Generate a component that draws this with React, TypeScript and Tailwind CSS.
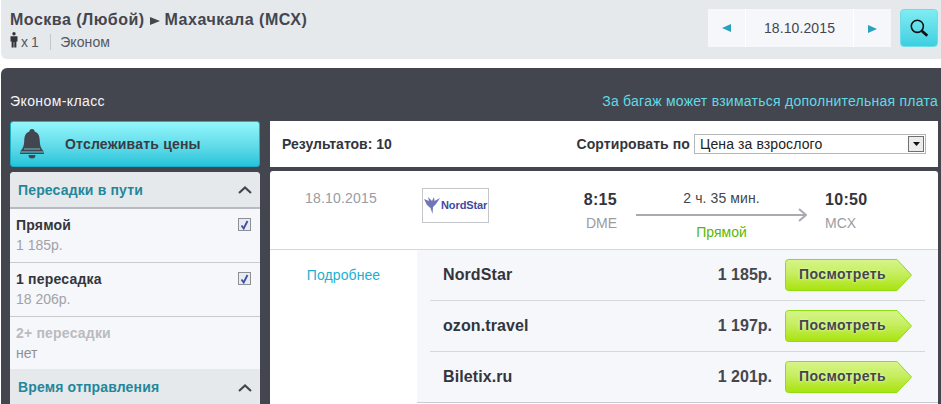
import { ReactNode } from 'react'

const offers = [
  { name: 'NordStar', price: '1 185р.' },
  { name: 'ozon.travel', price: '1 197р.' },
  { name: 'Biletix.ru', price: '1 201р.' },
]

function Chevron() {
  return (
    <svg width="14" height="9" viewBox="0 0 14 9" className="text-[#44464f]">
      <path d="M1 8 L7 2.5 L13 8" fill="none" stroke="currentColor" strokeWidth="2.2" />
    </svg>
  )
}

function Check() {
  return (
    <span className="w-[13px] h-[13px] border border-[#8c8f96] bg-[#e9ebf2] flex items-center justify-center">
      <svg width="9" height="10" viewBox="0 0 9 10">
        <path d="M1.5 5.5 L3.7 8.5 L7.5 1" fill="none" stroke="#3a4fa8" strokeWidth="1.8" />
      </svg>
    </span>
  )
}

function FilterHeader({ children, className }: { children: ReactNode; className?: string }) {
  return (
    <div className={`flex items-center justify-between px-[8px] bg-[#e6e9ec] ${className ?? ''}`}>
      <span className="pt-[1px] text-[14px] font-bold text-[#22879b] tracking-[0.15px]">{children}</span>
      <Chevron />
    </div>
  )
}

function StopRow({ label, price, enabled = true }: { label: string; price: string; enabled?: boolean }) {
  return (
    <div className={`pl-[6px] pr-[9px] pt-[6px] flex justify-between ${enabled ? 'h-[54px] border-b border-[#c9cbcf]' : 'h-[52px]'}`}>
      <div className="flex flex-col">
        <span className={`text-[14px] leading-[20px] font-bold tracking-[0.2px] ${enabled ? 'text-[#33353d]' : 'text-[#b9bbc0]'}`}>{label}</span>
        <span className={`text-[14px] leading-[20px] ${enabled ? 'text-[#a0a2a8]' : 'text-[#8e9096]'}`}>{price}</span>
      </div>
      {enabled && <div className="pt-[3px]"><Check /></div>}
    </div>
  )
}

function ViewButton() {
  return (
    <div className="relative w-[127px] h-[32px]">
      <svg width="127" height="32" viewBox="0 0 127 32" className="block">
        <defs>
          <linearGradient id="green" x1="0" y1="0" x2="0" y2="1">
            <stop offset="0" stopColor="#d6f58a" />
            <stop offset="0.45" stopColor="#c6ee60" />
            <stop offset="1" stopColor="#a9e30d" />
          </linearGradient>
        </defs>
        <path
          d="M3.5 .5 H112 L126.5 16 L112 31.5 H3.5 Q.5 31.5 .5 28.5 V3.5 Q.5 .5 3.5 .5 Z"
          fill="url(#green)"
          stroke="#8fdc14"
        />
      </svg>
      <span className="absolute left-[14px] top-0 leading-[31px] text-[14px] font-bold text-[#44464f] tracking-[0.4px] [text-shadow:0_0_3px_#f2ffd0]">
        Посмотреть
      </span>
    </div>
  )
}

export default function App() {
  return (
    <div className="w-[941px] h-[404px] overflow-hidden bg-white font-['Liberation_Sans',Arial,sans-serif] text-[#44464f]">
      <header className="ml-[1px] h-[59px] bg-[#e6e9ec] rounded-bl-[6px] flex justify-between pl-[9px] pr-[3px]">
        <div className="pt-[10px]">
          <div className="text-[16px] leading-[20px] font-bold tracking-[0.5px] flex items-center">
            Москва (Любой)
            <svg width="10" height="8" viewBox="0 0 10 8" className="mx-[5px] mt-[2px]">
              <path d="M0 0 L10 4 L0 8 Z" fill="#44464f" />
            </svg>
            Махачкала (МСХ)
          </div>
          <div className="flex items-center mt-[4px] text-[14px] leading-[16px] text-[#55575f]">
            <svg width="8" height="16" viewBox="0 0 8 16" className="-mt-[4px]">
              <circle cx="4" cy="1.8" r="1.7" fill="#33353d" />
              <path d="M.5 4.2 H7.5 V9.5 H6.4 V15.5 H4.3 V10 H3.7 V15.5 H1.6 V9.5 H.5 Z" fill="#33353d" />
            </svg>
            <span className="ml-[3px] tracking-[-0.5px]">x 1</span>
            <span className="w-px h-[16px] bg-[#c4c7cb] ml-[12px] mr-[9px]" />
            <span className="tracking-[0.1px]">Эконом</span>
          </div>
        </div>
        <div className="flex items-start pt-[9px]">
          <div className="h-[38px] w-[183px] flex bg-[#f6f7fa] text-[14px] text-[#44464f] divide-x divide-white">
            <div className="w-[38px] flex items-center justify-center">
              <svg width="9" height="8" viewBox="0 0 9 8"><path d="M9 0 V8 L0 4 Z" fill="#27a3bd" /></svg>
            </div>
            <div className="flex-1 flex items-center justify-center tracking-[0.1px]">18.10.2015</div>
            <div className="w-[37px] flex items-center justify-center pt-[2px]">
              <svg width="9" height="8" viewBox="0 0 9 8"><path d="M0 0 V8 L9 4 Z" fill="#27a3bd" /></svg>
            </div>
          </div>
          <button className="ml-[9px] w-[38px] h-[38px] rounded-[4px] border border-[#6fdde8] bg-gradient-to-b from-[#7eecf3] to-[#3bcfe0] flex items-center justify-center">
            <svg width="19" height="19" viewBox="0 0 22 22">
              <circle cx="8.5" cy="8.5" r="7" fill="none" stroke="#111" strokeWidth="1.8" />
              <path d="M13.5 13.5 L20 19.5" stroke="#111" strokeWidth="3.2" />
            </svg>
          </button>
        </div>
      </header>

      <main className="mt-[9px] ml-[1px] h-[336px] bg-[#44464f] rounded-tl-[6px] pl-[9px] pr-[3px]">
        <div className="h-[53px] flex justify-between pt-[24px] text-[14px] leading-[18px]">
          <span className="text-[#f4f5f6] tracking-[0.4px]">Эконом-класс</span>
          <span className="text-[#5fdbe6] tracking-[0.25px]">За багаж может взиматься дополнительная плата</span>
        </div>

        <div className="flex gap-[10px]">
          <aside className="w-[250px] shrink-0">
            <div className="h-[46px] rounded-[3px] border border-[#1bb0c6] bg-gradient-to-b from-[#93f7fc] to-[#20c4da] flex items-center pl-[8px]">
              <svg width="26" height="32" viewBox="0 0 26 32" className="shrink-0">
                <path
                  d="M13 1 a2.6 2.6 0 0 1 2.6 2.6 C20 5 20.6 9 20.8 13 C21 18 22 20.5 25 23.5 H1 C4 20.5 5 18 5.2 13 C5.4 9 6 5 10.4 3.6 A2.6 2.6 0 0 1 13 1 Z"
                  fill="#44464f"
                />
                <path d="M1 24.5 H25 V26 H1 Z" fill="#44464f" />
                <path d="M9.5 27 H16.5 A3.5 3.5 0 0 1 9.5 27 Z" fill="#44464f" />
                <path d="M5 21 H21" stroke="#5fc0cc" strokeWidth="1" />
              </svg>
              <span className="ml-[20px] text-[14px] font-bold text-[#3a3c44] tracking-[0.2px]">Отслеживать цены</span>
            </div>
            <div className="mt-[5px] bg-[#f6f7fa] rounded-t-[4px] overflow-hidden">
              <FilterHeader className="h-[37px] border-b-2 border-[#b9bbc2]">Пересадки в пути</FilterHeader>
              <StopRow label="Прямой" price="1 185р." />
              <StopRow label="1 пересадка" price="18 206р." />
              <StopRow label="2+ пересадки" price="нет" enabled={false} />
              <FilterHeader className="h-[36px]">Время отправления</FilterHeader>
            </div>
          </aside>

          <section className="flex-1">
            <div className="h-[46px] bg-white flex items-center justify-between px-[12px] text-[14px] font-bold text-[#33353d]">
              <span>Результатов: 10</span>
              <div className="flex items-center">
                <span className="tracking-[0.1px] mr-[4px]">Сортировать по</span>
                <div className="w-[232px] h-[20px] border border-[#b4b6ba] flex items-center justify-between pl-[5px] pr-[1px] font-normal text-[#222]">
                  <span className="tracking-[0.1px]">Цена за взрослого</span>
                  <span className="w-[16px] h-[16px] border border-[#6f6f6f] bg-[#ececec] flex items-center justify-center">
                    <svg width="7" height="4" viewBox="0 0 7 4"><path d="M0 0 H7 L3.5 4 Z" fill="#111" /></svg>
                  </span>
                </div>
              </div>
            </div>

            <div className="mt-[4px] h-[233px] bg-white rounded-t-[3px]">
              <div className="h-[79px] flex border-b border-[#d6d7da]">
                <div className="w-[152px] pt-[19px] pl-[35px] text-[14px] leading-[16px] text-[#9a9ca2] tracking-[0.2px]">18.10.2015</div>
                <div className="pt-[17px]">
                  <div className="w-[67px] h-[35px] border border-[#c4c6ca] flex items-center pl-[1px]">
                    <svg width="17" height="19" viewBox="0 0 17 19" className="shrink-0 opacity-80">
                      <path
                        d="M0 3 L5 5 L4 1 L8 5 L10 1 L10.5 5 L16 2 L12 8 L9 11 L8.5 18 L6.5 12 L3 9 L1 5 Z"
                        fill="#4a55a8"
                      />
                    </svg>
                    <span className="text-[11px] font-bold text-[#3f4a9e] tracking-[-0.1px]">NordStar</span>
                  </div>
                </div>
                <div className="ml-[78px] w-[50px] pt-[18px] text-right">
                  <div className="text-[16px] leading-[22px] font-bold text-[#33353d] tracking-[0.3px]">8:15</div>
                  <div className="text-[14px] leading-[24px] text-[#9a9ca2]">DME</div>
                </div>
                <div className="ml-[19px] w-[171px] pt-[18px] flex flex-col items-center">
                  <div className="text-[14px] leading-[18px] text-[#44464f] tracking-[0.1px]">2 ч. 35 мин.</div>
                  <svg width="171" height="14" viewBox="0 0 171 14" className="block mt-[1px]">
                    <path d="M0 7 H170 M163 1 L170 7 L163 13" fill="none" stroke="#a9abb0" strokeWidth="2" />
                  </svg>
                  <div className="mt-[1px] text-[14px] leading-[18px] text-[#5cb800]">Прямой</div>
                </div>
                <div className="ml-[18px] pt-[18px]">
                  <div className="text-[16px] leading-[22px] font-bold text-[#33353d] tracking-[0.3px]">10:50</div>
                  <div className="text-[14px] leading-[24px] text-[#9a9ca2]">MCX</div>
                </div>
              </div>

              <div className="flex">
                <div className="w-[147px] pt-[16px] text-center text-[14px] leading-[18px] text-[#1eb0cf] tracking-[0.1px]">Подробнее</div>
                <div className="flex-1 h-[153px] bg-[#f6f7fa] border-b border-[#c9cbcf] px-[13px]">
                  {offers.map((offer, i) => (
                    <div
                      key={offer.name}
                      className={`flex items-center pl-[13px] pr-[13px] ${i < 2 ? 'h-[51px] border-b border-[#d6d7da]' : 'h-[50px]'}`}
                    >
                      <span className="text-[16px] font-bold text-[#33353d] flex-1 tracking-[0.1px]">{offer.name}</span>
                      <span className="text-[16px] font-bold text-[#44464f] mr-[13px]">{offer.price}</span>
                      <ViewButton />
                    </div>
                  ))}
                </div>
              </div>
            </div>
          </section>
        </div>
      </main>
    </div>
  )
}
